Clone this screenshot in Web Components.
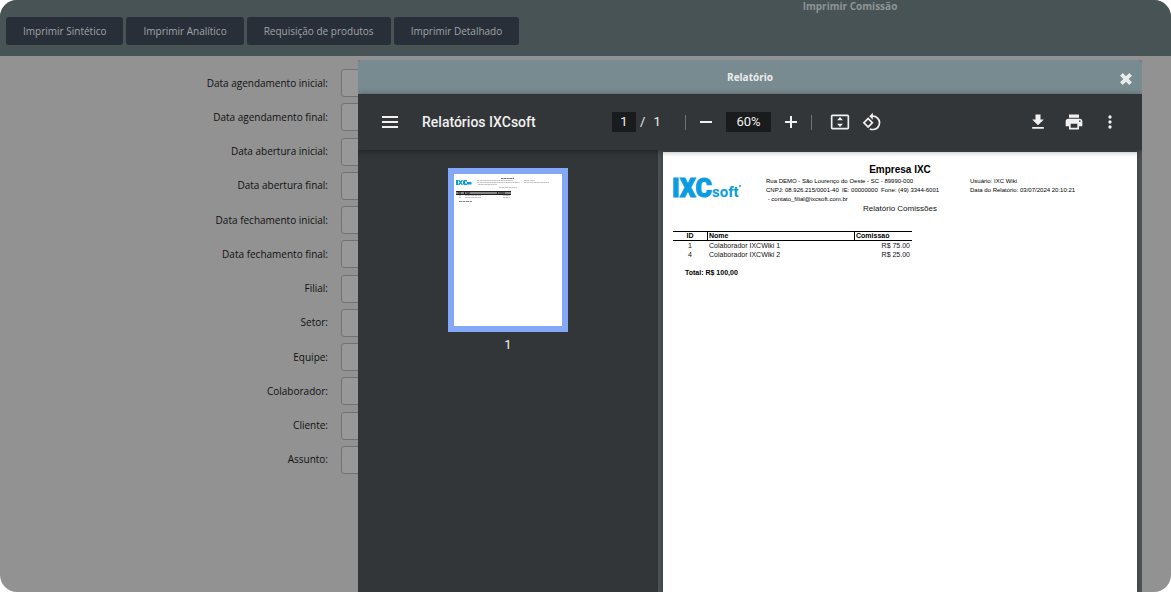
<!DOCTYPE html>
<html lang="pt-BR">
<head>
<meta charset="utf-8">
<title>Imprimir Comissão</title>
<style>
html, body { margin: 0; height: 100%; background: #fff; }
body { font: 10px/14px "Open Sans", "Noto Sans", sans-serif; color: #111; }
</style>
</head>
<body>
<commission-app>
  <action-button slot="actions">Imprimir Sintético</action-button>
  <action-button slot="actions">Imprimir Analítico</action-button>
  <action-button slot="actions">Requisição de produtos</action-button>
  <action-button slot="actions">Imprimir Detalhado</action-button>
  <form-field label="Data agendamento inicial:"></form-field>
  <form-field label="Data agendamento final:"></form-field>
  <form-field label="Data abertura inicial:"></form-field>
  <form-field label="Data abertura final:"></form-field>
  <form-field label="Data fechamento inicial:"></form-field>
  <form-field label="Data fechamento final:"></form-field>
  <form-field label="Filial:"></form-field>
  <form-field label="Setor:"></form-field>
  <form-field label="Equipe:"></form-field>
  <form-field label="Colaborador:"></form-field>
  <form-field label="Cliente:"></form-field>
  <form-field label="Assunto:"></form-field>
  <report-dialog slot="dialog">
    <span slot="title">Relatório</span>
    <pdf-viewer>
      <pdf-toolbar slot="toolbar">Relatórios IXCsoft</pdf-toolbar>
      <page-thumbnail slot="thumbs">1</page-thumbnail>
      <report-page></report-page>
    </pdf-viewer>
  </report-dialog>
</commission-app>
<script>
function define(name, html, setup) {
  const tpl = document.createElement('template');
  tpl.innerHTML = html;
  customElements.define(name, class extends HTMLElement {
    constructor() {
      super();
      this.attachShadow({ mode: 'open' }).append(tpl.content.cloneNode(true));
    }
    connectedCallback() { if (setup) setup(this, this.shadowRoot); }
  });
}

define('commission-app', `
<style>
:host { display: flex; flex-direction: column; position: relative; height: 100vh; overflow: hidden; border-radius: 17px; background: #929292; }
header { flex: none; height: 56px; background: #475355; }
h1 { margin: 0; padding-left: 529px; height: 17px; font-size: 10px; line-height: 12px; font-weight: 700; text-align: center; color: #8f9596; }
nav { display: flex; gap: 3px; padding: 0 6px; }
form { display: flex; flex-direction: column; justify-content: space-between; flex: none; height: 405px; margin-top: 13px; }
</style>
<header><h1>Imprimir Comissão</h1><nav><slot name="actions"></slot></nav></header>
<form><slot></slot></form>
<slot name="dialog"></slot>`);

define('action-button', `
<style>
:host { display: block; }
button { display: block; height: 28px; padding: 0 17px; border: 0; border-radius: 3px; background: #282f39; color: #a0a4a7; font: inherit; font-weight: 400; white-space: nowrap; }
</style>
<button type="button"><slot></slot></button>`);

define('form-field', `
<style>
:host { display: grid; grid-template-columns: 328px minmax(0, 480px); column-gap: 13px; align-items: center; }
label { text-align: right; padding-bottom: 1px; }
input { box-sizing: border-box; width: 100%; height: 28px; padding: 0 8px; border: 1px solid #707274; border-radius: 3px; background: #989898; font: inherit; }
</style>
<label for="f"></label><input id="f" type="text">`,
(el, root) => { root.querySelector('label').textContent = el.getAttribute('label'); });

define('report-dialog', `
<style>
:host { position: absolute; top: 60px; bottom: 0; left: 358px; right: 29px; display: flex; flex-direction: column; border-radius: 3px 3px 0 0; overflow: hidden; background: #323639; }
header { display: grid; grid-template-columns: 32px 1fr 32px; align-items: center; flex: none; height: 34px; background: #788b90; color: #ececec; }
h2 { grid-column: 2; margin: 0; font-size: 10px; line-height: 14px; font-weight: 700; text-align: center; }
button { display: grid; place-items: center; width: 32px; height: 34px; padding: 3px 0 0; border: 0; background: none; color: #e9ebeb; }
</style>
<header><h2><slot name="title"></slot></h2>
<button type="button" aria-label="Fechar"><svg width="12" height="12" viewBox="0 0 12 12"><path d="M1.400 1.400 10.600 10.600M10.600 1.400 1.400 10.600" stroke="currentColor" stroke-width="3.800"/></svg></button></header>
<slot></slot>`);

define('pdf-viewer', `
<style>
:host { display: flex; flex-direction: column; flex: 1; min-height: 0; font-family: Roboto, sans-serif; color: #f1f1f1; }
.body { display: flex; flex: 1; min-height: 0; }
aside { flex: none; box-sizing: border-box; width: 300px; padding-top: 18px; background: #323639; }
main { flex: 1; min-width: 0; display: flex; padding: 2px 5px 0; background: #4d5356; }
</style>
<slot name="toolbar"></slot>
<div class="body"><aside><slot name="thumbs"></slot></aside><main><slot></slot></main></div>`);

define('pdf-toolbar', `
<style>
:host { display: flex; align-items: center; flex: none; box-sizing: border-box; height: 56px; padding: 0 16px; position: relative; background: #323639; box-shadow: 0 1px 6px rgba(0,0,0,.45); font-size: 13px; line-height: 20px; }
.start, .end { display: flex; align-items: center; flex: 1; }
.end { justify-content: flex-end; gap: 4px; }
.center { display: flex; align-items: center; }
h3 { margin: 0 0 0 16px; font-size: 14px; font-weight: 500; white-space: nowrap; }
button { display: grid; place-items: center; width: 32px; height: 32px; padding: 0; border: 0; background: none; color: #f1f1f1; }
svg { fill: currentColor; display: block; }
input { box-sizing: border-box; height: 20px; padding: 0; border: 0; background: #191b1c; color: #f1f1f1; font: inherit; text-align: center; }
.page { width: 24px; }
.zoom { width: 45px; margin: 0 4px; }
.total { display: flex; gap: 8px; width: 49px; padding-left: 4px; box-sizing: border-box; }
i { width: 1px; height: 15px; background: #6f7375; margin-right: 4px; }
i.wide { margin: 0 12px 0 4px; }
</style>
<div class="start"><button aria-label="Menu"><svg width="24" height="24"><path d="M4 18h16v-2H4zm0-5h16v-2H4zm0-7v2h16V6z"/></svg></button><h3><slot></slot></h3></div>
<div class="center">
<input class="page" aria-label="Página" value="1"><span class="total"><span>/</span><span>1</span></span><i></i>
<button aria-label="Reduzir"><svg width="20" height="20" viewBox="0 0 20 20"><path d="M4 9h12v2H4z"/></svg></button>
<input class="zoom" aria-label="Zoom" value="60%">
<button aria-label="Ampliar"><svg width="20" height="20" viewBox="0 0 20 20"><path d="M9 4h2v5h5v2h-5v5H9v-5H4V9h5z"/></svg></button><i class="wide"></i>
<button aria-label="Ajustar à página"><svg width="20" height="20" viewBox="0 0 24 24"><path d="M21 3H3c-1.1 0-2 .9-2 2v14c0 1.100.9 2 2 2h18c1.100 0 2-.9 2-2V5c0-1.100-.9-2-2-2zm0 16H3V5h18zM12 6 8.500 10h7zM12 18l3.500-4h-7z"/></svg></button>
<button aria-label="Girar"><svg width="20" height="20" viewBox="0 0 24 24"><path d="M7.340 6.410.860 12.900l6.490 6.480 6.490-6.480zM3.690 12.900l3.660-3.660L11 12.900l-3.660 3.660zM19.360 6.640A8.950 8.950 0 0 0 13 4V.760L8.760 5 13 9.240V6c1.790 0 3.580.680 4.950 2.050a7.007 7.007 0 0 1 0 9.900 6.973 6.973 0 0 1-7.790 1.440l-1.490 1.490C10.020 21.620 11.510 22 13 22a8.980 8.980 0 0 0 6.360-15.360z"/></svg></button>
</div>
<div class="end">
<button aria-label="Baixar"><svg width="20" height="20" viewBox="0 0 24 24"><path d="M19 9h-4V3H9v6H5l7 7zM5 18v2h14v-2z"/></svg></button>
<button aria-label="Imprimir"><svg width="20" height="20" viewBox="0 0 24 24"><path d="M19 8H5c-1.660 0-3 1.340-3 3v6h4v4h12v-4h4v-6c0-1.660-1.340-3-3-3zm-3 11H8v-5h8zm3-7c-.550 0-1-.450-1-1s.450-1 1-1 1 .450 1 1-.450 1-1 1zm-1-9H6v4h12z"/></svg></button>
<button aria-label="Mais"><svg width="20" height="20" viewBox="0 0 24 24"><path d="M12 8a2 2 0 1 0 0-4 2 2 0 0 0 0 4zm0 2a2 2 0 1 0 0 4 2 2 0 0 0 0-4zm0 6a2 2 0 1 0 0 4 2 2 0 0 0 0-4z"/></svg></button>
</div>`);

define('page-thumbnail', `
<style>
:host { display: flex; flex-direction: column; align-items: center; gap: 4px; font-size: 13px; line-height: 18px; }
svg { display: block; border: 6px solid #84a8f8; background: #fff; }
</style>
<svg width="108" height="152" viewBox="0 0 108 152" aria-hidden="true">
<g fill="#0b9bdc"><path d="M2 6h2v5H2zM4 6l1.500 0 1 1.500L7.500 6H9L7.500 8.500 9 11H7.500L6.500 9.500 5.500 11H4l1.500-2.500zM13 6v1.500h-2v2h2V11h-3l-1-1V7l1-1zM13 8h4.500v2.500H13z"/></g>
<g stroke="#999" stroke-width=".6" stroke-dasharray="2 .4 3 .4 1 .3"><path d="M23 6.500h36M23 8.500h43M24 10.500h19M70 6.500h11M70 8.500h25M45 13.500h18"/><path d="M5 21.500h2M11 21.500h16M49 21.500h7M5 23.500h2M11 23.500h16M49 23.500h7"/></g>
<path d="M47 4.500h13" stroke="#777" stroke-dasharray="2 .4 3 .4"/><path d="M5 27.500h13" stroke="#888" stroke-dasharray="3 .5"/>
<path d="M2 17h55v4H2z" fill="#888"/><path d="M2 17.500h55M2 20.500h55M10.500 17v4M43.500 17v4M4 19h3M12 19h4M45 19h6" stroke="#222"/>
</svg><span><slot></slot></span>`);

define('report-page', `
<style>
:host { display: block; flex: 1; padding: 11px 10px; background: #fff; box-shadow: 0 0 5px #323639; color: #111; font: 7px/9px "Liberation Sans", Arial, sans-serif; white-space: nowrap; }
h4 { margin: 0; font-size: 10px; line-height: 14px; text-align: center; color: #000; }
.info { display: grid; grid-template-columns: 93px 204px 1fr; height: 27px; font-size: 6px; color: #000; }
p { margin: 0; white-space: pre; }
svg { display: block; overflow: visible; }
.sub { font-size: 8px; line-height: 9px; text-align: center; }
table { table-layout: fixed; width: 239px; margin-top: 18px; border-collapse: separate; border-spacing: 0; }
th, td { padding: 0 2px; text-align: left; height: 9px; line-height: 9px; }
th { border-top: 1px solid #000; border-bottom: 1px solid #000; color: #000; height: 8px; line-height: 8px; }
th + th { border-left: 1px solid #000; padding-left: 1px; }
th:first-child, td:first-child { text-align: center; }
td:last-child { text-align: right; }
.total { margin: 9px 0 0 12px; font-weight: 700; color: #000; }
</style>
<h4>Empresa IXC</h4>
<div class="info">
<svg width="70" height="24" fill="#0b9be0" role="img" aria-label="IXCsoft"><text x="-1" y="20" font-family="Roboto" font-weight="900" font-size="25" stroke="#0b9be0" stroke-width="1">IXC</text><text x="39" y="20" font-family="Roboto" font-weight="700" font-size="15">soft</text><circle cx="67" cy="9" r="1"/></svg>
<div><p>Rua DEMO - São Lourenço do Oeste - SC - 89990-000</p><p>CNPJ: 08.926.215/0001-40  IE: 00000000  Fone: (49) 3344-6001</p><p> - contato_filial@ixcsoft.com.br</p></div>
<div><p>Usuário: IXC Wiki</p><p>Data do Relatório: 03/07/2024 20:10:21</p></div>
</div>
<p class="sub">Relatório Comissões</p>
<table><colgroup><col style="width:34px"><col style="width:147px"><col></colgroup>
<thead><tr><th>ID</th><th>Nome</th><th>Comissao</th></tr></thead>
<tbody><tr><td>1</td><td>Colaborador IXCWiki 1</td><td>R$ 75.00</td></tr><tr><td>4</td><td>Colaborador IXCWiki 2</td><td>R$ 25.00</td></tr></tbody></table>
<p class="total">Total: R$ 100,00</p>`);
</script>
</body>
</html>
